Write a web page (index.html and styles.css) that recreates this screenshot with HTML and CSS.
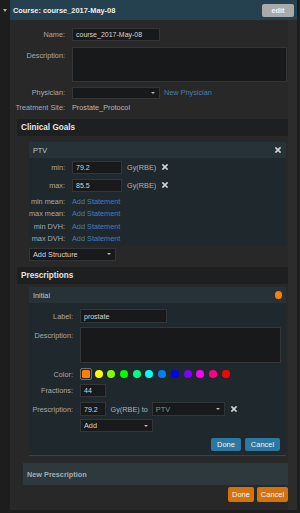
FILE: index.html
```html
<!DOCTYPE html>
<html>
<head>
<meta charset="utf-8">
<link rel="stylesheet" href="styles.css">
</head>
<body>
<div class="app">
  <div class="gutter"><span class="caret"></span></div>
  <div class="panel">
    <div class="panel-head">
      <span class="title">Course: course_2017-May-08</span>
      <span class="btn-edit">edit</span>
    </div>
    <div class="panel-body">
      <div class="content">
        <div class="row r-name">
          <span class="lbl">Name:</span>
          <span class="input w-name">course_2017-May-08</span>
        </div>
        <div class="row r-desc top">
          <span class="lbl lbl-top">Description:</span>
          <span class="textarea w-desc"></span>
        </div>
        <div class="row r-phys">
          <span class="lbl">Physician:</span>
          <span class="select w-phys"><span></span><span class="arrow"></span></span>
          <span class="link phys-link">New Physician</span>
        </div>
        <div class="row r-site">
          <span class="lbl">Treatment Site:</span>
          <span class="val">Prostate_Protocol</span>
        </div>

        <section class="section goals">
          <div class="section-head">Clinical Goals</div>
          <div class="section-body">
            <div class="card">
              <div class="card-head"><span>PTV</span><svg class="x" viewBox="0 0 6 6"><path d="M1 1L5 5M5 1L1 5"/></svg></div>
              <div class="card-body goal-body">
                <div class="row crow">
                  <span class="lbl clbl">min:</span>
                  <span class="input w-goal">79.2</span>
                  <span class="unit">Gy(RBE)</span>
                  <svg class="x xs" viewBox="0 0 6 6"><path d="M1 1L5 5M5 1L1 5"/></svg>
                </div>
                <div class="row crow r-max">
                  <span class="lbl clbl">max:</span>
                  <span class="input w-goal">85.5</span>
                  <span class="unit">Gy(RBE)</span>
                  <svg class="x xs" viewBox="0 0 6 6"><path d="M1 1L5 5M5 1L1 5"/></svg>
                </div>
                <div class="stmts">
                  <div class="row srow"><span class="lbl clbl">min mean:</span><span class="link">Add Statement</span></div>
                  <div class="row srow"><span class="lbl clbl">max mean:</span><span class="link">Add Statement</span></div>
                  <div class="row srow"><span class="lbl clbl">min DVH:</span><span class="link">Add Statement</span></div>
                  <div class="row srow"><span class="lbl clbl">max DVH:</span><span class="link">Add Statement</span></div>
                </div>
              </div>
            </div>
            <span class="select w-struct"><span>Add Structure</span><span class="arrow"></span></span>
          </div>
        </section>

        <section class="section presc">
          <div class="section-head">Prescriptions</div>
          <div class="section-body presc-body">
            <div class="card">
              <div class="card-head"><span>Initial</span><span class="dot"></span></div>
              <div class="card-body init-body">
                <div class="row prow r-label">
                  <span class="lbl plbl">Label:</span>
                  <span class="input w-label">prostate</span>
                </div>
                <div class="row prow r-pdesc top">
                  <span class="lbl plbl lbl-top">Description:</span>
                  <span class="textarea w-pdesc"></span>
                </div>
                <div class="row prow r-color">
                  <span class="lbl plbl">Color:</span>
                  <span class="swatches">
                    <span class="sw sel"><span class="dotc" style="background:#ff7f00"></span></span>
                    <span class="sw"><span class="dotc" style="background:#ffff00"></span></span>
                    <span class="sw"><span class="dotc" style="background:#80ff00"></span></span>
                    <span class="sw"><span class="dotc" style="background:#00ff00"></span></span>
                    <span class="sw"><span class="dotc" style="background:#00ff80"></span></span>
                    <span class="sw"><span class="dotc" style="background:#00ffff"></span></span>
                    <span class="sw"><span class="dotc" style="background:#0080ff"></span></span>
                    <span class="sw"><span class="dotc" style="background:#0000ff"></span></span>
                    <span class="sw"><span class="dotc" style="background:#8000ff"></span></span>
                    <span class="sw"><span class="dotc" style="background:#ff00ff"></span></span>
                    <span class="sw"><span class="dotc" style="background:#ff0080"></span></span>
                    <span class="sw"><span class="dotc" style="background:#ff0000"></span></span>
                  </span>
                </div>
                <div class="row prow r-frac">
                  <span class="lbl plbl">Fractions:</span>
                  <span class="input w-num">44</span>
                </div>
                <div class="row prow r-rx">
                  <span class="lbl plbl">Prescription:</span>
                  <span class="input w-num">79.2</span>
                  <span class="unit">Gy(RBE) to</span>
                  <span class="select w-ptv"><span class="dim">PTV</span><span class="arrow"></span></span>
                  <svg class="x xs xrx" viewBox="0 0 6 6"><path d="M1 1L5 5M5 1L1 5"/></svg>
                </div>
                <div class="row prow r-add">
                  <span class="lbl plbl"></span>
                  <span class="select w-add"><span>Add</span><span class="arrow"></span></span>
                </div>
                <div class="btns">
                  <span class="btn blue">Done</span>
                  <span class="btn blue">Cancel</span>
                </div>
              </div>
            </div>
          </div>
        </section>

        <div class="new-presc">New Prescription</div>
        <div class="btns main-btns">
          <span class="btn orange">Done</span>
          <span class="btn orange">Cancel</span>
        </div>
      </div>
      <div class="scroll"></div>
    </div>
  </div>
</div>
</body>
</html>
```

FILE: styles.css
```css
* { box-sizing: border-box; }
html, body { margin: 0; padding: 0; }
body {
  background: #1d1d1d;
  font-family: "Liberation Sans", Arial, sans-serif;
  font-size: 7.3px;
  color: #acacac;
  width: 300px;
  height: 513px;
  overflow: hidden;
}
.app { display: flex; height: 513px; }
.gutter { width: 10px; flex: none; }
.caret {
  display: block;
  width: 0; height: 0;
  margin: 9px 0 0 3px;
  border-left: 2.5px solid transparent;
  border-right: 2.5px solid transparent;
  border-top: 3px solid #b0b0b0;
}
.panel {
  width: 287px;
  height: 510px;
  flex: none;
  display: flex;
  flex-direction: column;
  background: #282828;
}
.panel-head {
  height: 20px;
  flex: none;
  background: #25414f;
  display: flex;
  align-items: center;
  justify-content: space-between;
  padding: 0 3px 0 3px;
}
.title { font-weight: bold; color: #eeeeee; font-size: 7.4px; }
.btn-edit {
  width: 32px; height: 13px;
  background: #a9a9a9;
  color: #f4f4f4;
  font-weight: bold;
  border-radius: 2px;
  display: flex; align-items: center; justify-content: center;
  font-size: 7.3px;
}
.panel-body { flex: 1; display: flex; }
.content { width: 278px; padding: 0 0 0 4px; }
.scroll { width: 9px; background: #2c2c2c; }

.row { display: flex; align-items: center; white-space: nowrap; }
.row.top { align-items: flex-start; }
.lbl { width: 51px; margin-right: 7px; text-align: right; color: #a9a9a9; flex: none; }
.lbl-top { padding-top: 4px; }
.val { color: #b8b8b8; }
.link { color: #4c7eac; }

.input, .textarea, .select {
  background: #17191a;
  border: 1px solid #333537;
  color: #d6d6d6;
  display: flex;
  align-items: center;
  flex: none;
}
.input { padding-left: 3px; font-size: 7px; }
.select { justify-content: space-between; padding: 0 4px 0 3px; font-size: 7.3px; }
.arrow {
  width: 0; height: 0;
  border-left: 2px solid transparent;
  border-right: 2px solid transparent;
  border-top: 2.5px solid #b8b8b8;
}
.dim { color: #8e8e8e; }

.r-name { margin-top: 8px; height: 13px; }
.w-name { width: 88px; height: 13px; }
.r-desc { margin-top: 5.7px; }
.w-desc { width: 215px; height: 35.6px; }
.r-phys { margin-top: 4.7px; height: 12px; }
.w-phys { width: 88px; height: 12px; }
.phys-link { margin-left: 4px; }
.r-site { margin-top: 4px; height: 10px; }

.section { margin-left: 3px; width: 271px; }
.goals { margin-top: 6px; }
.section-head {
  height: 17px;
  background: #1e1f20;
  color: #e4e4e4;
  font-weight: bold;
  font-size: 8.2px;
  padding-left: 4px;
  display: flex; align-items: center;
}
.section-body { padding: 6px 2px 6px 12px; }
.presc-body { padding: 3px 2px 3px 12px; }

.card-head {
  height: 16.5px;
  background: #263238;
  color: #b9c9d2;
  padding: 0 5px 0 4px;
  display: flex; align-items: center; justify-content: space-between;
}
.x {
  width: 6px; height: 6px; flex: none;
  stroke: #d4d4d4; stroke-width: 1.7; fill: none; stroke-linecap: square;
}
.card-body { background: #1f282c; }
.goal-body { padding: 2.5px 0 1px 0; }
.clbl { width: 36px; }
.crow { height: 13px; }
.r-max { margin-top: 5px; }
.w-goal { width: 50px; height: 13px; }
.unit { margin-left: 5px; color: #b0b0b0; }
.xs { margin-left: 6px; }
.stmts { margin-top: 2.8px; }
.srow { height: 12.5px; }

.w-struct { width: 87px; height: 13px; margin-top: 2px; }

.init-body { padding: 6px 6px 4px 0; border-bottom: 1px solid #3b4043; }
.plbl { width: 44px; }
.r-label { height: 13.5px; }
.w-label { width: 87px; height: 13.5px; }
.r-pdesc { margin-top: 4.5px; }
.w-pdesc { width: 201px; height: 36px; }
.r-color { margin-top: 5px; height: 12px; }
.swatches { display: flex; align-items: center; }
.sw { width: 12px; height: 12px; margin-right: 0.7px; display: flex; align-items: center; justify-content: center; }
.dotc { width: 8px; height: 8px; border-radius: 50%; }
.sw.sel { border: 1.5px solid #6e6e6e; border-radius: 2px; margin-right: 0.7px; }
.sw.sel .dotc { border-radius: 1.5px; }
.r-frac { margin-top: 4px; height: 13px; }
.w-num { width: 25.5px; height: 13px; }
.r-rx { margin-top: 5px; height: 13.5px; }
.r-rx .w-num { height: 13.5px; }
.w-ptv { width: 73px; height: 14px; margin-left: 4px; }
.r-add { margin-top: 3.5px; height: 13px; }
.w-add { width: 73px; height: 13px; }

.btns { display: flex; justify-content: flex-end; gap: 4px; margin-top: 6px; }
.btn {
  height: 13px;
  display: flex; align-items: center; justify-content: center;
  color: #f2f2f2;
  border-radius: 2px;
  font-size: 7.5px;
}
.blue { background: #2a79a1; }
.blue:first-child { width: 30px; }
.blue:last-child { width: 35px; }

.new-presc {
  margin: 4px 0 0 9px;
  width: 266px;
  height: 21.5px;
  background: #2e393e;
  color: #a3adb2;
  font-weight: bold;
  padding-left: 4px;
  display: flex; align-items: center;
}
.main-btns { margin-top: 2.5px; gap: 3px; }
.orange { background: #d4720d; height: 15px; }
.orange:first-child { width: 26px; }
.orange:last-child { width: 31px; }
.dot { width: 7.5px; height: 7.5px; border-radius: 50%; background: #ff8000; margin-right: -1px; }
```
